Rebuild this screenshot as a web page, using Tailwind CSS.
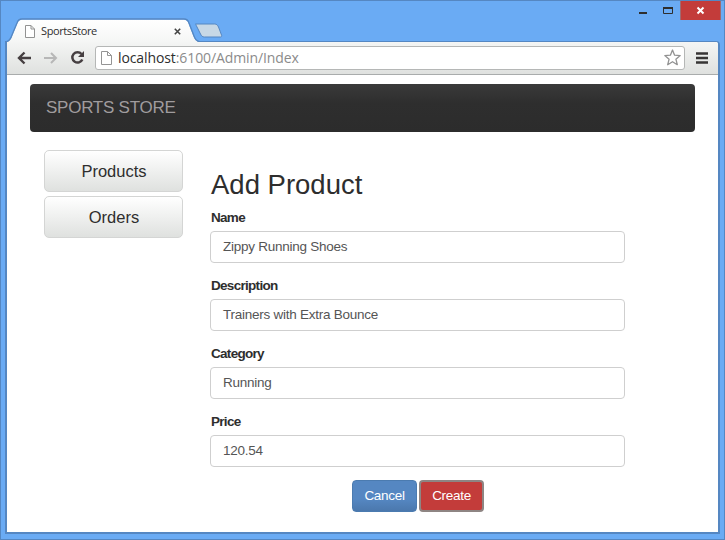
<!DOCTYPE html>
<html lang="en">
<head>
<meta charset="utf-8">
<title>SportsStore</title>
<script src="https://cdn.jsdelivr.net/npm/@tailwindcss/browser@4"></script>
</head>
<body class="w-[725px] h-[540px] overflow-hidden font-['Liberation_Sans',Arial,sans-serif] text-[#2e2e2e]">
<div class="relative flex h-[540px] w-[725px] flex-col border border-[#5587c2] bg-[#6aabf4] pl-[4px] pr-[4px] pb-[5px]">
  <div class="absolute right-[3px] top-0 flex h-[19px] items-start">
    <svg class="h-[19px] w-[80px]" viewBox="0 0 80 19" fill="none"><path d="M39 12h8" stroke="#2e2e2e" stroke-width="2"/><path d="M63.5 6.5h9v6h-9z" stroke="#2e2e2e"/><path d="M63 7h10" stroke="#2e2e2e" stroke-width="2"/></svg>
    <div class="flex h-[19px] w-[41px] items-center justify-center border-x border-[#9f6a70] bg-[#c33c3a]">
      <svg class="h-[9px] w-[9px]" viewBox="0 0 9 9"><path d="M1.5 1.5l6 6M7.5 1.5l-6 6" stroke="#fff" stroke-width="2"/></svg>
    </div>
  </div>
  <header class="relative h-[40px] shrink-0">
    <svg class="absolute left-0 top-[17px] h-[24px] w-[222px]" viewBox="0 0 222 24">
      <defs><linearGradient id="tab" x1="0" y1="0" x2="0" y2="1"><stop offset="0" stop-color="#fff"/><stop offset="1" stop-color="#f5f6f5"/></linearGradient></defs>
      <path d="M1.5 24c4-1 5-4 6-7l5-12c1-3 2-3.500 5-3.500h161c3 0 4 1 5 4l5 13c1 3 2 4 5 5.500z" fill="url(#tab)"/>
      <path d="M1 24c4-1 5-4 6-7l5-12c1-3 2-4 5-4h162c3 0 4 1 5 4l5 13c1 3 2 5 6 6" fill="none" stroke="#5587c2" stroke-width="1.300"/>
      <path d="M190.500 6h19c2 0 3 1 4 3l3 8c.5 1 0 2-1 2h-16c-2 0-3-1-4-3l-4-8c-.6-1-.5-2-1-2z" fill="#c7d8e6" stroke="#5587c2"/>
    </svg>
    <div class="absolute left-[20px] top-[22px] flex items-center">
      <svg class="h-[13px] w-[10px]" viewBox="0 0 10 13" fill="#fff" stroke="#929292"><path d="M.5.5h5.500l3.500 3.500v8.500h-9zM6 .5v3.500h3.500"/></svg>
      <span class="ml-[6px] block w-[55px] whitespace-nowrap font-['Open_Sans','Noto_Sans',sans-serif] text-[11px] leading-[16px] tracking-[-0.4px]">SportsStore</span>
      <svg class="ml-[78px] h-[7px] w-[7px]" viewBox="0 0 7 7"><path d="M.8.8l5.400 5.400M6.200.8L.8 6.200" stroke="#444" stroke-width="1.600"/></svg>
    </div>
  </header>
  <div class="flex min-h-0 grow flex-col overflow-hidden rounded-tr-[4px] border-x-2 border-b-2 border-t border-[#5587c2] bg-white">
    <nav class="-mt-px flex h-[34px] shrink-0 items-center border-b border-[#a9acac] bg-gradient-to-b from-[#f5f6f5] to-[#dfe1df] pl-[10px] pr-[10px]">
      <svg class="h-[14px] w-[14px]" viewBox="0 0 14 14" fill="none" stroke="#463f41" stroke-width="2.400"><path d="M14 7H2M7.500 1.500L2 7l5.500 5.500"/></svg>
      <svg class="ml-[13px] h-[14px] w-[14px]" viewBox="0 0 14 14" fill="none" stroke="#b7b7b7" stroke-width="2"><path d="M0 7h12M7 2l5 5-5 5"/></svg>
      <svg class="ml-[12px] h-[15px] w-[15px]" viewBox="0 0 15 15" fill="none" stroke="#463f41" stroke-width="2.500"><path d="M11.500 4A5.200 5.200 0 1 0 12.300 9.500"/><path d="M14 1v6H8z" fill="#463f41" stroke="none"/></svg>
      <div class="ml-[10px] flex h-[24px] w-[590px] items-center rounded-[3px] border border-[#b5b7b6] bg-white pl-[5px] pr-[3px]">
        <svg class="h-[14px] w-[11px]" viewBox="0 0 11 14" fill="none" stroke="#949494"><path d="M.5.5h6l4 4v9h-10zM6.500.5v4h4"/></svg>
        <span class="ml-[6px] font-['Open_Sans','Noto_Sans',sans-serif] text-[14px] leading-[20px] tracking-[-0.1px] text-[#8b8b8b]"><span class="text-[#2e2e2e]">localhost</span>:6100/Admin/Index</span>
        <svg class="ml-auto h-[17px] w-[17px]" viewBox="0 0 17 17" fill="#fff" stroke="#929292" stroke-width="1.300" stroke-linejoin="round"><path d="M8.500 1l2.100 5.200 5.600.4-4.300 3.600 1.400 5.500-4.800-3-4.800 3 1.400-5.500L.8 6.600l5.600-.4z"/></svg>
      </div>
      <svg class="ml-auto h-[12px] w-[12px]" viewBox="0 0 12 12" stroke="#373535" stroke-width="2.500"><path d="M0 1.500h12M0 6h12M0 10.500h12"/></svg>
    </nav>
    <main class="pl-[23px] pt-[9px]">
      <div class="flex h-[48px] w-[665px] items-center rounded-[4px] bg-gradient-to-b from-[#3a3a3a] via-[#2e2e2e] via-40% to-[#2c2c2c] pl-[16px] text-[17px] tracking-[-0.25px] text-[#a09c9e]"><span class="whitespace-nowrap">SPORTS STORE</span></div>
      <div class="flex pl-[14px] pt-[18px]">
        <div class="flex w-[139px] flex-col gap-[4px]">
          <button class="h-[42px] rounded-[5px] border border-[#d4d5d4] bg-gradient-to-b from-white to-[#dfe1df] pl-px text-[16.5px]">Products</button>
          <button class="h-[42px] rounded-[5px] border border-[#d4d5d4] bg-gradient-to-b from-white to-[#dfe1df] pl-px text-[16.5px]">Orders</button>
        </div>
        <form class="ml-[27px] w-[415px] pt-[19px]">
          <h1 class="h-[32px] whitespace-nowrap pl-px text-[27.5px] leading-[32px]">Add Product</h1>
          <label class="mt-[8px] block h-[18px] pl-px text-[13.5px] font-bold leading-[18px] tracking-[-0.7px]">Name</label>
          <div class="mt-[4px] flex h-[32px] items-center rounded-[4px] border border-[#cfcfcf] pl-[12px] text-[13.5px] tracking-[-0.25px] text-[#555]">Zippy Running Shoes</div>
          <label class="mt-[14px] block h-[18px] pl-px text-[13.5px] font-bold leading-[18px] tracking-[-0.7px]">Description</label>
          <div class="mt-[4px] flex h-[32px] items-center rounded-[4px] border border-[#cfcfcf] pl-[12px] text-[13.5px] tracking-[-0.25px] text-[#555]">Trainers with Extra Bounce</div>
          <label class="mt-[14px] block h-[18px] pl-px text-[13.5px] font-bold leading-[18px] tracking-[-0.7px]">Category</label>
          <div class="mt-[4px] flex h-[32px] items-center rounded-[4px] border border-[#cfcfcf] pl-[12px] text-[13.5px] tracking-[-0.25px] text-[#555]">Running</div>
          <label class="mt-[14px] block h-[18px] pl-px text-[13.5px] font-bold leading-[18px] tracking-[-0.7px]">Price</label>
          <div class="mt-[4px] flex h-[32px] items-center rounded-[4px] border border-[#cfcfcf] pl-[12px] text-[13.5px] tracking-[-0.25px] text-[#555]">120.54</div>
          <div class="mt-[13px] flex gap-[2px] pl-[142px] text-[13.5px] tracking-[-0.3px] text-white">
            <button type="button" class="h-[32px] w-[65px] rounded-[4px] border border-[#4b7bb0] bg-gradient-to-b from-[#5587c2] from-60% to-[#4b78ad] pt-px">Cancel</button>
            <button type="button" class="h-[32px] w-[65px] rounded-[4px] border-2 border-[#8e8583] bg-[#c33c3a] pt-px">Create</button>
          </div>
        </form>
      </div>
    </main>
  </div>
</div>
</body>
</html>
